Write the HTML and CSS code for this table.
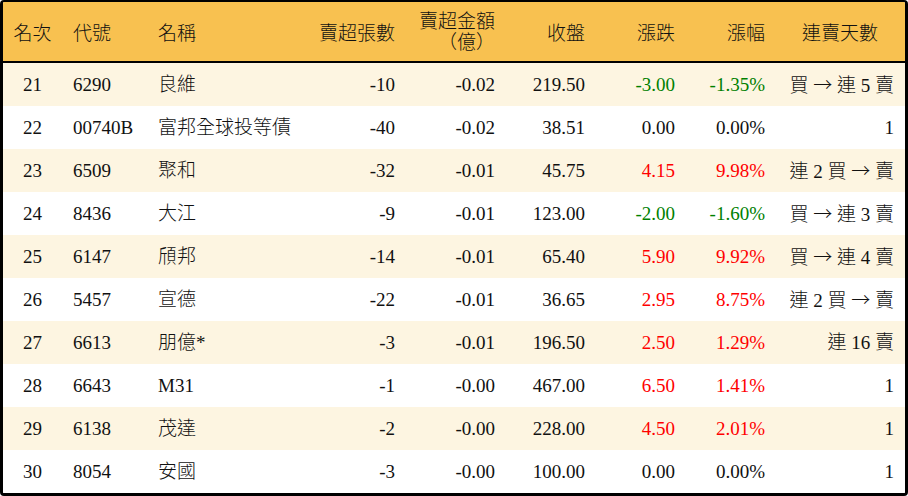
FILE: index.html
```html
<!DOCTYPE html>
<html lang="zh-Hant">
<head>
<meta charset="utf-8">
<title>賣超排行</title>
<link rel="stylesheet" href="styles.css">
</head>
<body>
<div class="board">
<table class="rank">
<colgroup>
<col class="c1"><col class="c2"><col class="c3"><col class="c4"><col class="c5"><col class="c6"><col class="c7"><col class="c8"><col class="c9">
</colgroup>
<thead>
<tr>
<th class="ctr">名次</th>
<th class="lft">代號</th>
<th class="lft">名稱</th>
<th class="rgt">賣超張數</th>
<th class="rgt two">賣超金額<br>（億）</th>
<th class="rgt">收盤</th>
<th class="rgt">漲跌</th>
<th class="rgt">漲幅</th>
<th class="ctr last">連賣天數</th>
</tr>
</thead>
<tbody>
<tr><td class="ctr">21</td><td class="lft">6290</td><td class="lft">良維</td><td class="rgt">-10</td><td class="rgt">-0.02</td><td class="rgt">219.50</td><td class="rgt dn">-3.00</td><td class="rgt dn">-1.35%</td><td class="rgt last">買 <span class="arw">→</span> 連 5 賣</td></tr>
<tr><td class="ctr">22</td><td class="lft">00740B</td><td class="lft">富邦全球投等債</td><td class="rgt">-40</td><td class="rgt">-0.02</td><td class="rgt">38.51</td><td class="rgt">0.00</td><td class="rgt">0.00%</td><td class="rgt last">1</td></tr>
<tr><td class="ctr">23</td><td class="lft">6509</td><td class="lft">聚和</td><td class="rgt">-32</td><td class="rgt">-0.01</td><td class="rgt">45.75</td><td class="rgt up">4.15</td><td class="rgt up">9.98%</td><td class="rgt last">連 2 買 <span class="arw">→</span> 賣</td></tr>
<tr><td class="ctr">24</td><td class="lft">8436</td><td class="lft">大江</td><td class="rgt">-9</td><td class="rgt">-0.01</td><td class="rgt">123.00</td><td class="rgt dn">-2.00</td><td class="rgt dn">-1.60%</td><td class="rgt last">買 <span class="arw">→</span> 連 3 賣</td></tr>
<tr><td class="ctr">25</td><td class="lft">6147</td><td class="lft">頎邦</td><td class="rgt">-14</td><td class="rgt">-0.01</td><td class="rgt">65.40</td><td class="rgt up">5.90</td><td class="rgt up">9.92%</td><td class="rgt last">買 <span class="arw">→</span> 連 4 賣</td></tr>
<tr><td class="ctr">26</td><td class="lft">5457</td><td class="lft">宣德</td><td class="rgt">-22</td><td class="rgt">-0.01</td><td class="rgt">36.65</td><td class="rgt up">2.95</td><td class="rgt up">8.75%</td><td class="rgt last">連 2 買 <span class="arw">→</span> 賣</td></tr>
<tr><td class="ctr">27</td><td class="lft">6613</td><td class="lft">朋億*</td><td class="rgt">-3</td><td class="rgt">-0.01</td><td class="rgt">196.50</td><td class="rgt up">2.50</td><td class="rgt up">1.29%</td><td class="rgt last">連 16 賣</td></tr>
<tr><td class="ctr">28</td><td class="lft">6643</td><td class="lft">M31</td><td class="rgt">-1</td><td class="rgt">-0.00</td><td class="rgt">467.00</td><td class="rgt up">6.50</td><td class="rgt up">1.41%</td><td class="rgt last">1</td></tr>
<tr><td class="ctr">29</td><td class="lft">6138</td><td class="lft">茂達</td><td class="rgt">-2</td><td class="rgt">-0.00</td><td class="rgt">228.00</td><td class="rgt up">4.50</td><td class="rgt up">2.01%</td><td class="rgt last">1</td></tr>
<tr><td class="ctr">30</td><td class="lft">8054</td><td class="lft">安國</td><td class="rgt">-3</td><td class="rgt">-0.00</td><td class="rgt">100.00</td><td class="rgt">0.00</td><td class="rgt">0.00%</td><td class="rgt last">1</td></tr>
</tbody>
</table>
</div>
</body>
</html>
```
FILE: styles.css
```css
html, body {
  margin: 0;
  padding: 0;
  background: #ffffff;
}
body {
  font-family: "Liberation Serif", "Noto Sans CJK TC", serif;
  font-size: 19px;
  font-weight: 300;
  color: #111111;
}
.board {
  width: 908px;
  height: 496px;
  box-sizing: border-box;
  border: 3px solid #000000;
  border-top-width: 2px;
  border-radius: 4px;
  overflow: hidden;
}
.rank {
  width: 902px;
  border-collapse: separate;
  border-spacing: 0;
  table-layout: fixed;
}
.c1 { width: 59px; }
.c2 { width: 85px; }
.c3 { width: 153px; }
.c4 { width: 105px; }
.c5 { width: 100px; }
.c6 { width: 90px; }
.c7 { width: 90px; }
.c8 { width: 90px; }
.c9 { width: 130px; }
.rank th {
  height: 59px;
  background: #f8c150;
  border-bottom: 2px solid #000000;
  font-weight: 300;
  padding: 0 10px;
  vertical-align: middle;
  white-space: nowrap;
}
.rank th.two {
  line-height: 21px;
}
.rank td {
  height: 43px;
  padding: 0 10px;
  vertical-align: middle;
  white-space: nowrap;
  line-height: 22px;
}
.rank tbody tr:nth-child(odd) td {
  background: #fdf5e1;
}
.rank tbody tr:nth-child(even) td {
  background: #ffffff;
}
.ctr { text-align: center; }
.lft { text-align: left; padding-left: 11px !important; }
.rgt { text-align: right; }
.rank th.last { text-align: center; padding: 0; }
.rank td.last { padding-right: 11px; }
.rank th.ctr:first-child, .rank td.ctr:first-child { padding: 0; }
.arw {
  font-family: "Noto Sans CJK TC", sans-serif;
}
.up { color: #ff0000; }
.dn { color: #008000; }
```
